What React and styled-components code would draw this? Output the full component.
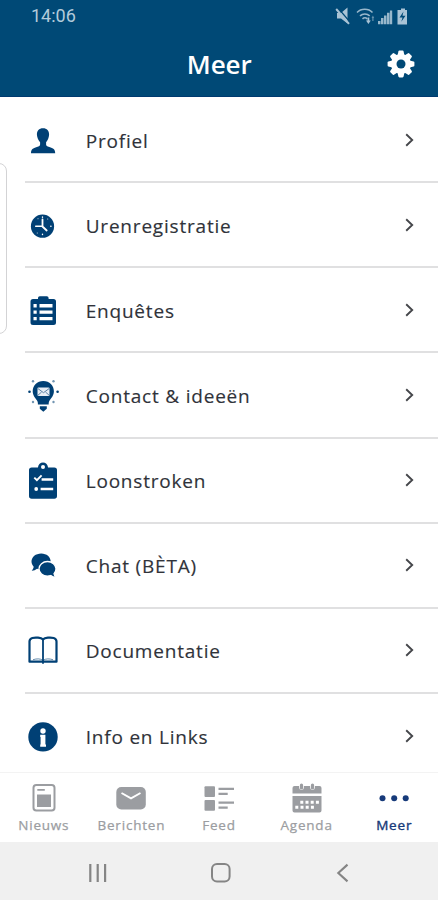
import styled, { createGlobalStyle } from 'styled-components';

const palette = {
  main: '#004976',
  icon: '#004075',
  text: '#30333a',
  line: '#e0e0e1',
  muted: '#9b9da1',
  active: '#173a7a',
};

const menuItems = [
  { label: 'Profiel', icon: <ProfileIcon /> },
  { label: 'Urenregistratie', icon: <ClockIcon /> },
  { label: 'Enquêtes', icon: <SurveyIcon /> },
  { label: 'Contact & ideeën', icon: <IdeaIcon /> },
  { label: 'Loonstroken', icon: <PayslipIcon /> },
  { label: 'Chat (BÈTA)', icon: <ChatIcon /> },
  { label: 'Documentatie', icon: <BookIcon /> },
  { label: 'Info en Links', icon: <InfoIcon /> },
];

const tabs = [
  { label: 'Nieuws', icon: <NewsIcon /> },
  { label: 'Berichten', icon: <MailIcon /> },
  { label: 'Feed', icon: <FeedIcon /> },
  { label: 'Agenda', icon: <AgendaIcon /> },
  { label: 'Meer', icon: <DotsIcon />, active: true },
];

export default function App() {
  return (
    <>
      <GlobalStyle />
      <Screen>
        <Header>
          <StatusBar>
            <span>14:06</span>
            <StatusIcons />
          </StatusBar>
          <TitleBar>
            <h1>Meer</h1>
            <GearIcon />
          </TitleBar>
        </Header>

        <EdgeHandle />

        <Menu>
          {menuItems.map((item) => (
            <MenuRow key={item.label}>
              {item.icon}
              <MenuLabel>{item.label}</MenuLabel>
              <Chevron />
            </MenuRow>
          ))}
        </Menu>

        <TabBar>
          {tabs.map((tab) => (
            <Tab key={tab.label} $active={tab.active}>
              {tab.icon}
              <span>{tab.label}</span>
            </Tab>
          ))}
        </TabBar>

        <SystemBar>
          <svg width="20" height="20" viewBox="0 0 20 20" fill="none" stroke="#858585" strokeWidth="2.2">
            <path d="M2.3 1v18M9.700 1v18M17.100 1v18" />
          </svg>
          <svg width="20" height="20" viewBox="0 0 20 20" fill="none" stroke="#858585" strokeWidth="2">
            <rect x="1" y="1" width="17.600" height="17.600" rx="5" />
          </svg>
          <svg width="20" height="20" viewBox="0 0 20 20" fill="none" stroke="#858585" strokeWidth="2.1">
            <path d="M14.500 1.600 5.300 10l9.200 8.400" />
          </svg>
        </SystemBar>
      </Screen>
    </>
  );
}

function StatusIcons() {
  return (
    <svg width="76" height="20" viewBox="0 0 76 20" fill="#a9c3d5">
      <path d="M2 7h4L12.500 1.500v16L6 12.500H2z" />
      <path d="M2.500 1.500 15 16" stroke="#004976" strokeWidth="1.200" />
      <path d="M1.200 3 14 17.800" stroke="#a9c3d5" strokeWidth="2" />
      <g fill="none" stroke="#a9c3d5" strokeWidth="1.500" opacity=".9">
        <path d="M22 6.500c4-4.300 11.500-4.300 15.500 0" />
        <path d="M25 9.900c2.700-2.700 7-2.700 9.700 0" />
        <path d="M27.500 12.900c1.500-1.400 3.500-1.400 4.700 0" />
      </g>
      <path d="M32.500 11.500h1.800v3h1.500L33.400 18 31 14.500h1.500z" />
      <path d="M36.600 12l1.300-2.500 1.300 2.500zM37.300 12h1.200v3h-1.200z" opacity=".6" />
      <path d="M43 15h2.500v3.300H43zM46 12h2.500v6.300H46zM49 9.500h2.500v8.800H49zM52 6.800h2.500v11.500H52zM54.900 4.500h2.300v13.800h-2.300z" opacity=".9" />
      <path d="M64.500 4H66V2.500h4V4h2v14.500H62.500V4z" />
      <path d="m68.500 5.500-4 6h3l-1.200 4.300 4.200-6h-3z" fill="#004976" />
    </svg>
  );
}

function GearIcon() {
  return (
    <svg width="28" height="28" viewBox="0 0 28 28">
      <g fill="#fff">
        <circle cx="14" cy="14" r="10" />
        {[0, 45, 90, 135, 180, 225, 270, 315].map((angle) => (
          <path
            key={angle}
            transform={`rotate(${angle} 14 14)`}
            d="M10.300 6.500 11.400 1.400q.2-.8 1-.8h3.200q.8 0 1 .8l1.100 5.100z"
          />
        ))}
      </g>
      <circle cx="14" cy="14" r="4.500" fill={palette.main} />
    </svg>
  );
}

function ProfileIcon() {
  return (
    <MenuIcon>
      <path d="M18 8.300c4 0 6.200 2.700 6.100 6.300-.1 3.200-1.500 6.200-3 7.700v2.200c0 1.300.9 1.700 3.200 2.500 4 1.300 5.900 2 5.900 6.300H6c0-4.300 1.900-5 5.900-6.300 2.300-.8 3.200-1.200 3.200-2.500v-2.200c-1.500-1.500-3.100-4.500-3.200-7.700-.1-3.600 2.100-6.300 6.100-6.300z" />
    </MenuIcon>
  );
}

function ClockIcon() {
  return (
    <MenuIcon>
      <circle cx="17.500" cy="21.200" r="11.600" />
      <g fill="none" stroke="#fff" strokeLinecap="round">
        <path d="M17.500 14.500v7l4.200 4" strokeWidth="1.800" />
        <path d="M10.700 21.300h6" strokeWidth="1.500" />
        <path d="M17.500 12v.2M17.500 29.300v.2M25.800 21.300h.2" strokeWidth="1.400" />
        <path d="M13 13.700v.1M22.700 14v.1M12.300 28v.1" strokeWidth=".8" />
      </g>
    </MenuIcon>
  );
}

function SurveyIcon() {
  return (
    <MenuIcon>
      <path d="M8 9h5V8q0-1.800 1.800-1.800h7Q23.600 6.200 23.600 8v1h4.900q2.500 0 2.500 2.500v21q0 2.500-2.500 2.500H8q-2.500 0-2.500-2.500v-21Q5.500 9 8 9z" />
      <path fill="#fff" d="M8.500 14h3.200v3.400H8.500zM14.500 14h13v3.400h-13zM8.500 20.400h3.200v3.400H8.500zM14.500 20.400h13v3.400h-13zM8.500 26.900h3.200v3.400H8.500zM14.500 26.900h13v3.400h-13z" />
    </MenuIcon>
  );
}

function IdeaIcon() {
  return (
    <MenuIcon>
      <path d="M18.300 6c6.200 0 10.600 4.500 10.600 10.300 0 4.200-2.500 6.700-4.300 9.100-.9 1.200-.9 2.600-.9 4.200H12.900c0-1.600 0-3-.9-4.200-1.800-2.400-4.300-4.900-4.300-9.100C7.700 10.500 12.100 6 18.300 6z" />
      <path d="M14.800 31.300h7v2.500l-3.500 3-3.500-3z" />
      <rect x="12.500" y="12.500" width="12" height="8.500" rx="1" fill="#e7eef5" />
      <path d="m12.800 13.500 5.700 4.200 5.700-4.200M13 20.200l3.600-3.200M24 20.200 20.500 17" fill="none" stroke="#5c82a6" />
      <circle cx="4.500" cy="16.800" r="1.300" />
      <circle cx="32.600" cy="16.800" r="1.300" />
      <g opacity=".55">
        <circle cx="8" cy="6.300" r="1.200" />
        <circle cx="28.500" cy="6.300" r="1.200" />
        <circle cx="8" cy="27" r="1.200" />
        <circle cx="28.500" cy="27" r="1.200" />
      </g>
    </MenuIcon>
  );
}

function PayslipIcon() {
  return (
    <MenuIcon>
      <path d="M6.700 7.400h6.200C13.500 4 15.300 2.400 18 2.400s4.500 1.600 5.100 5h6.200q2.700 0 2.700 2.700v26q0 2.700-2.700 2.700H6.700Q4 38.800 4 36.100v-26q0-2.700 2.700-2.700z" />
      <circle cx="18" cy="7" r="2" fill="#fff" />
      <path d="m9.300 17.600 2.600 2.600 4.700-4.900" fill="none" stroke="#fff" strokeWidth="1.900" />
      <path d="M16.600 19.500h11.600M15.600 29h12.600" stroke="#fff" strokeWidth="2.300" />
      <circle cx="11.200" cy="29" r="1.900" fill="#fff" />
    </MenuIcon>
  );
}

function ChatIcon() {
  return (
    <MenuIcon>
      <path d="M16.200 8.600c5.500 0 9.500 3.600 9.500 8 0 4.500-4 8-9.500 8-1.500 0-2.900-.3-4.200-.8-1.500 1.300-3 1.900-5.300 1.900 1.200-1.300 1.800-2.400 2-3.900-1.300-1.400-2.200-3.200-2.200-5.200 0-4.400 4.200-8 9.700-8z" />
      <path
        d="M22.500 16.500c4.500 0 8.500 3.300 8.500 7.300 0 1.900-.8 3.500-2 4.800.2 1.300.8 2.400 1.900 3.700-2.200 0-3.900-.6-5.100-1.700-1 .3-2.100.5-3.300.5-4.700 0-8.500-3.300-8.500-7.300s3.800-7.300 8.500-7.300z"
        stroke="#fff"
        strokeWidth="1.300"
      />
    </MenuIcon>
  );
}

function BookIcon() {
  return (
    <MenuIcon>
      <path
        d="M18 9.300C16 7.600 10.500 7.200 7.300 8Q4.500 8.800 4.500 11.500V31.700H31.500V11.500q0-2.700-2.800-3.500C25.500 7.200 20 7.600 18 9.300z"
        fill="none"
        stroke={palette.icon}
        strokeWidth="2.200"
        strokeLinejoin="round"
      />
      <path d="M18 9.500v24.300" stroke={palette.icon} strokeWidth="1.800" />
      <path d="M8 29.700c4-1.200 7-1.200 10 .6 3-1.800 6-1.800 10-.6" fill="none" stroke={palette.icon} strokeWidth=".6" />
    </MenuIcon>
  );
}

function InfoIcon() {
  return (
    <MenuIcon>
      <circle cx="18" cy="20.900" r="14.700" />
      <circle cx="18" cy="15" r="2.700" fill="#fff" />
      <path d="M15.200 18.800h5.200v9.600h.6v2.300h-5.800v-2.300h.4v-7.300h-.4z" fill="#fff" />
    </MenuIcon>
  );
}

function Chevron() {
  return (
    <svg width="12" height="16" viewBox="0 0 12 16" fill="none" stroke="#45474b" strokeWidth="1.900">
      <path d="m2.200 2.200 6 5.800-6 5.800" />
    </svg>
  );
}

function NewsIcon() {
  return (
    <TabIcon>
      <rect x="6.500" y="5" width="21" height="25.500" rx="2.800" fill="none" stroke="currentColor" strokeWidth="2" />
      <path d="M10 14.500h14v12.500H10zM10.300 9h7.500v1.800h-7.500z" />
    </TabIcon>
  );
}

function MailIcon() {
  return (
    <TabIcon>
      <rect x="2.300" y="7" width="29.500" height="22.500" rx="5" />
      <path d="m7.500 13 9.500 5.300 9.500-5.300" fill="none" stroke="#fff" strokeWidth="2" />
    </TabIcon>
  );
}

function FeedIcon() {
  return (
    <TabIcon>
      <rect x="2.500" y="6.200" width="10.500" height="10.700" rx="1" />
      <rect x="2.500" y="20" width="10.500" height="10.700" rx="1" />
      <path d="M16.500 7.700H32v2.200H16.500zM16.500 12.800h9.200v2.200h-9.200zM16.500 21.500H32v2.200H16.500zM16.500 26.600h9.200v2.200h-9.200z" />
    </TabIcon>
  );
}

function AgendaIcon() {
  return (
    <TabIcon>
      <path d="M2.500 8q0-2 2-2h25q2 0 2 2v5.500h-29zM2.500 16h29v14.500q0 2-2 2h-25q-2 0-2-2z" />
      <path d="M11.500 5v2.500M22.500 5v2.500" stroke="#fff" strokeWidth="4.800" strokeLinecap="round" />
      <path d="M11.500 5v3M22.500 5v3" stroke="currentColor" strokeWidth="3.200" strokeLinecap="round" />
      <path d="M10.300 22.300H29M5.300 27.300h18.700" stroke="#fff" strokeWidth="3" strokeDasharray="3 2.200" />
    </TabIcon>
  );
}

function DotsIcon() {
  return (
    <TabIcon>
      <circle cx="5.500" cy="18.200" r="3" />
      <circle cx="17.200" cy="18.200" r="3" />
      <circle cx="28.700" cy="18.200" r="3" />
    </TabIcon>
  );
}

const GlobalStyle = createGlobalStyle`
  * {
    box-sizing: border-box;
  }

  body {
    margin: 0;
    background-color: #fff;
    font-family: 'Open Sans', 'Noto Sans', sans-serif;
  }
`;

const Screen = styled.div`
  position: relative;
  width: 438px;
  height: 900px;
  display: flex;
  flex-direction: column;
  overflow: hidden;
  background-color: #fff;
`;

const Header = styled.header`
  height: 97px;
  flex-shrink: 0;
  background-color: ${palette.main};
  border-bottom: 1px solid #003a70;
  color: #fff;
`;

const StatusBar = styled.div`
  height: 32px;
  display: flex;
  justify-content: space-between;
  align-items: center;
  padding: 0 27px 0 31px;
  color: #b3cbdb;
  font-family: Roboto, sans-serif;
  font-size: 18px;

  span {
    margin-top: -1px;
  }
`;

const TitleBar = styled.div`
  height: 64px;
  display: grid;
  grid-template-columns: 1fr auto 1fr;
  align-items: center;
  padding-right: 23.500px;

  h1 {
    grid-column: 2;
    margin: 0 0 0 24px;
    font-size: 26px;
    font-weight: 600;
    line-height: 36px;
  }

  svg {
    justify-self: end;
  }
`;

const EdgeHandle = styled.div`
  position: absolute;
  left: -12px;
  top: 163px;
  width: 19px;
  height: 171px;
  border: 1px solid #d3d3d5;
  border-radius: 8px;
`;

const Menu = styled.main`
  height: 675px;
  flex-shrink: 0;
  padding: 1px 0 0 25px;
  overflow: hidden;
`;

const MenuRow = styled.div`
  height: 85.150px;
  display: flex;
  align-items: center;
  padding-right: 22px;
  border-bottom: 2px solid ${palette.line};

  &:last-child {
    border-bottom-color: transparent;
  }
`;

const MenuIcon = styled.svg.attrs({ viewBox: '0 0 36 40' })`
  width: 36px;
  height: 40px;
  flex-shrink: 0;
  fill: ${palette.icon};
`;

const MenuLabel = styled.span`
  flex: 1;
  margin-left: 24.700px;
  padding-top: 2px;
  color: ${palette.text};
  font-size: 19px;
  font-weight: 500;
  letter-spacing: 0.800px;
  white-space: nowrap;
  -webkit-text-stroke: 0.150px currentColor;
`;

const TabBar = styled.nav`
  height: 70px;
  flex-shrink: 0;
  display: grid;
  grid-template-columns: repeat(5, 1fr);
  border-top: 1px solid #f3f3f3;
`;

const Tab = styled.div`
  display: flex;
  flex-direction: column;
  align-items: center;
  padding-top: 7px;
  color: ${(props) => (props.$active ? palette.active : palette.muted)};
  font-size: 13.500px;
  font-weight: 500;
  line-height: 18px;
  letter-spacing: 0.800px;
  -webkit-text-stroke: ${(props) => (props.$active ? 0.4 : 0.25)}px currentColor;
`;

const TabIcon = styled.svg.attrs({ viewBox: '0 0 34 36' })`
  width: 34px;
  height: 36px;
  flex-shrink: 0;
  fill: currentColor;
`;

const SystemBar = styled.footer`
  height: 58px;
  flex-shrink: 0;
  display: flex;
  justify-content: space-between;
  align-items: center;
  padding: 3px 85px 0 88px;
  background-color: #f0f0f0;
`;
